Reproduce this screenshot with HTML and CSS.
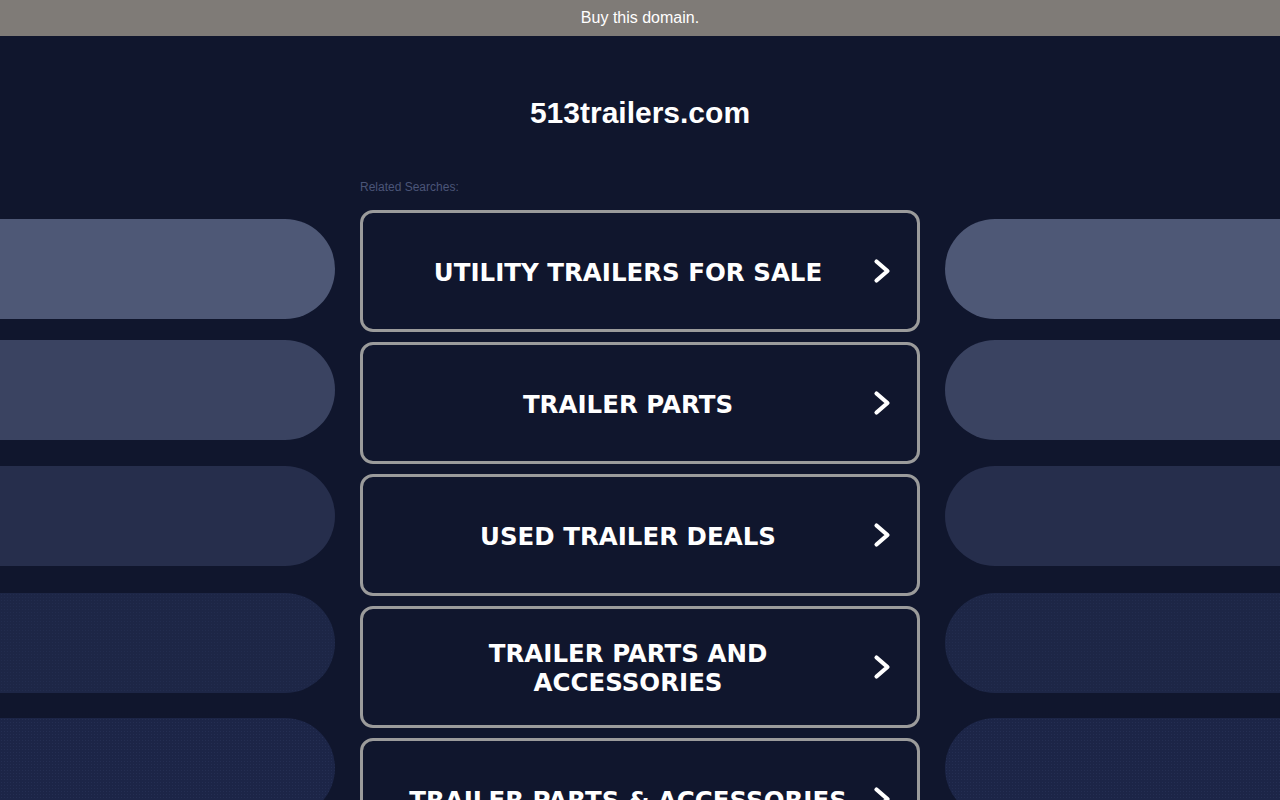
FILE: index.html
```html
<!DOCTYPE html>
<html lang="en">
<head>
<meta charset="utf-8">
<title>513trailers.com</title>
<link rel="stylesheet" href="styles.css">
</head>
<body>
<div class="topbar">Buy this domain.</div>
<div class="layout">
  <div class="side side-left">
    <div class="pill pill-1"></div>
    <div class="pill pill-2"></div>
    <div class="pill pill-3"></div>
    <div class="pill pill-4"></div>
    <div class="pill pill-5"></div>
  </div>
  <main class="center">
    <h1 class="title">513trailers.com</h1>
    <div class="related">Related Searches:</div>
    <div class="links">
      <a class="link" href="#"><span class="link-text">UTILITY TRAILERS FOR SALE</span><svg class="chev" viewBox="0 0 18 26"><polyline points="3.5,3.5 14.5,13 3.5,22.5"/></svg></a>
      <a class="link" href="#"><span class="link-text">TRAILER PARTS</span><svg class="chev" viewBox="0 0 18 26"><polyline points="3.5,3.5 14.5,13 3.5,22.5"/></svg></a>
      <a class="link" href="#"><span class="link-text">USED TRAILER DEALS</span><svg class="chev" viewBox="0 0 18 26"><polyline points="3.5,3.5 14.5,13 3.5,22.5"/></svg></a>
      <a class="link" href="#"><span class="link-text">TRAILER PARTS AND ACCESSORIES</span><svg class="chev" viewBox="0 0 18 26"><polyline points="3.5,3.5 14.5,13 3.5,22.5"/></svg></a>
      <a class="link" href="#"><span class="link-text">TRAILER PARTS &amp; ACCESSORIES</span><svg class="chev" viewBox="0 0 18 26"><polyline points="3.5,3.5 14.5,13 3.5,22.5"/></svg></a>
    </div>
  </main>
  <div class="side side-right">
    <div class="pill pill-1"></div>
    <div class="pill pill-2"></div>
    <div class="pill pill-3"></div>
    <div class="pill pill-4"></div>
    <div class="pill pill-5"></div>
  </div>
</div>
</body>
</html>
```

FILE: styles.css
```css
html, body {
  margin: 0;
  padding: 0;
  height: 100%;
  overflow: hidden;
}
body {
  background: #10162d;
  font-family: "Liberation Sans", Arial, sans-serif;
  color: #ffffff;
}
.topbar {
  height: 36px;
  line-height: 35px;
  background: #7f7b77;
  color: #ffffff;
  font-size: 16px;
  text-align: center;
}
.layout {
  display: grid;
  grid-template-columns: 1fr 560px 1fr;
  column-gap: 25px;
}
.side {
  display: flex;
  flex-direction: column;
  padding-top: 183px;
}
.pill {
  height: 100px;
}
.side-left .pill {
  border-radius: 0 50px 50px 0;
}
.side-right .pill {
  border-radius: 50px 0 0 50px;
}
.pill-1 { background: #4e5876; }
.pill-2 { background: #3a4361; margin-top: 21px; }
.pill-3 { background: #262e4c; margin-top: 26px; }
.pill-4 {
  background-color: #1d2646;
  background-image: radial-gradient(rgba(80, 95, 140, 0.12) 0.6px, transparent 0.8px);
  background-size: 3px 3px;
  margin-top: 27px;
}
.pill-5 {
  background-color: #1c2547;
  background-image: radial-gradient(rgba(80, 95, 140, 0.16) 0.6px, transparent 0.8px);
  background-size: 3px 3px;
  margin-top: 25px;
}
.center {
  display: flex;
  flex-direction: column;
}
.title {
  margin: 59px 0 0;
  font-size: 30px;
  line-height: 36px;
  font-weight: bold;
  text-align: center;
  color: #ffffff;
}
.related {
  margin-top: 49px;
  font-size: 12px;
  line-height: 14px;
  color: #4b5578;
}
.links {
  margin-top: 16px;
  display: flex;
  flex-direction: column;
  gap: 10px;
}
.link {
  box-sizing: border-box;
  height: 122px;
  border: 3px solid #9b9b9b;
  border-radius: 13px;
  display: flex;
  align-items: center;
  padding: 0 26px 0 40px;
  gap: 20px;
  text-decoration: none;
  color: #ffffff;
}
.link-text {
  flex: 1;
  text-align: center;
  font-family: "DejaVu Sans", Verdana, sans-serif;
  font-weight: bold;
  font-size: 24.5px;
  line-height: 29px;
  padding-top: 2px;
}
.chev {
  width: 18px;
  height: 26px;
  flex: none;
  fill: none;
  stroke: #ffffff;
  stroke-width: 4.2;
  stroke-linecap: round;
  stroke-linejoin: round;
}
```
